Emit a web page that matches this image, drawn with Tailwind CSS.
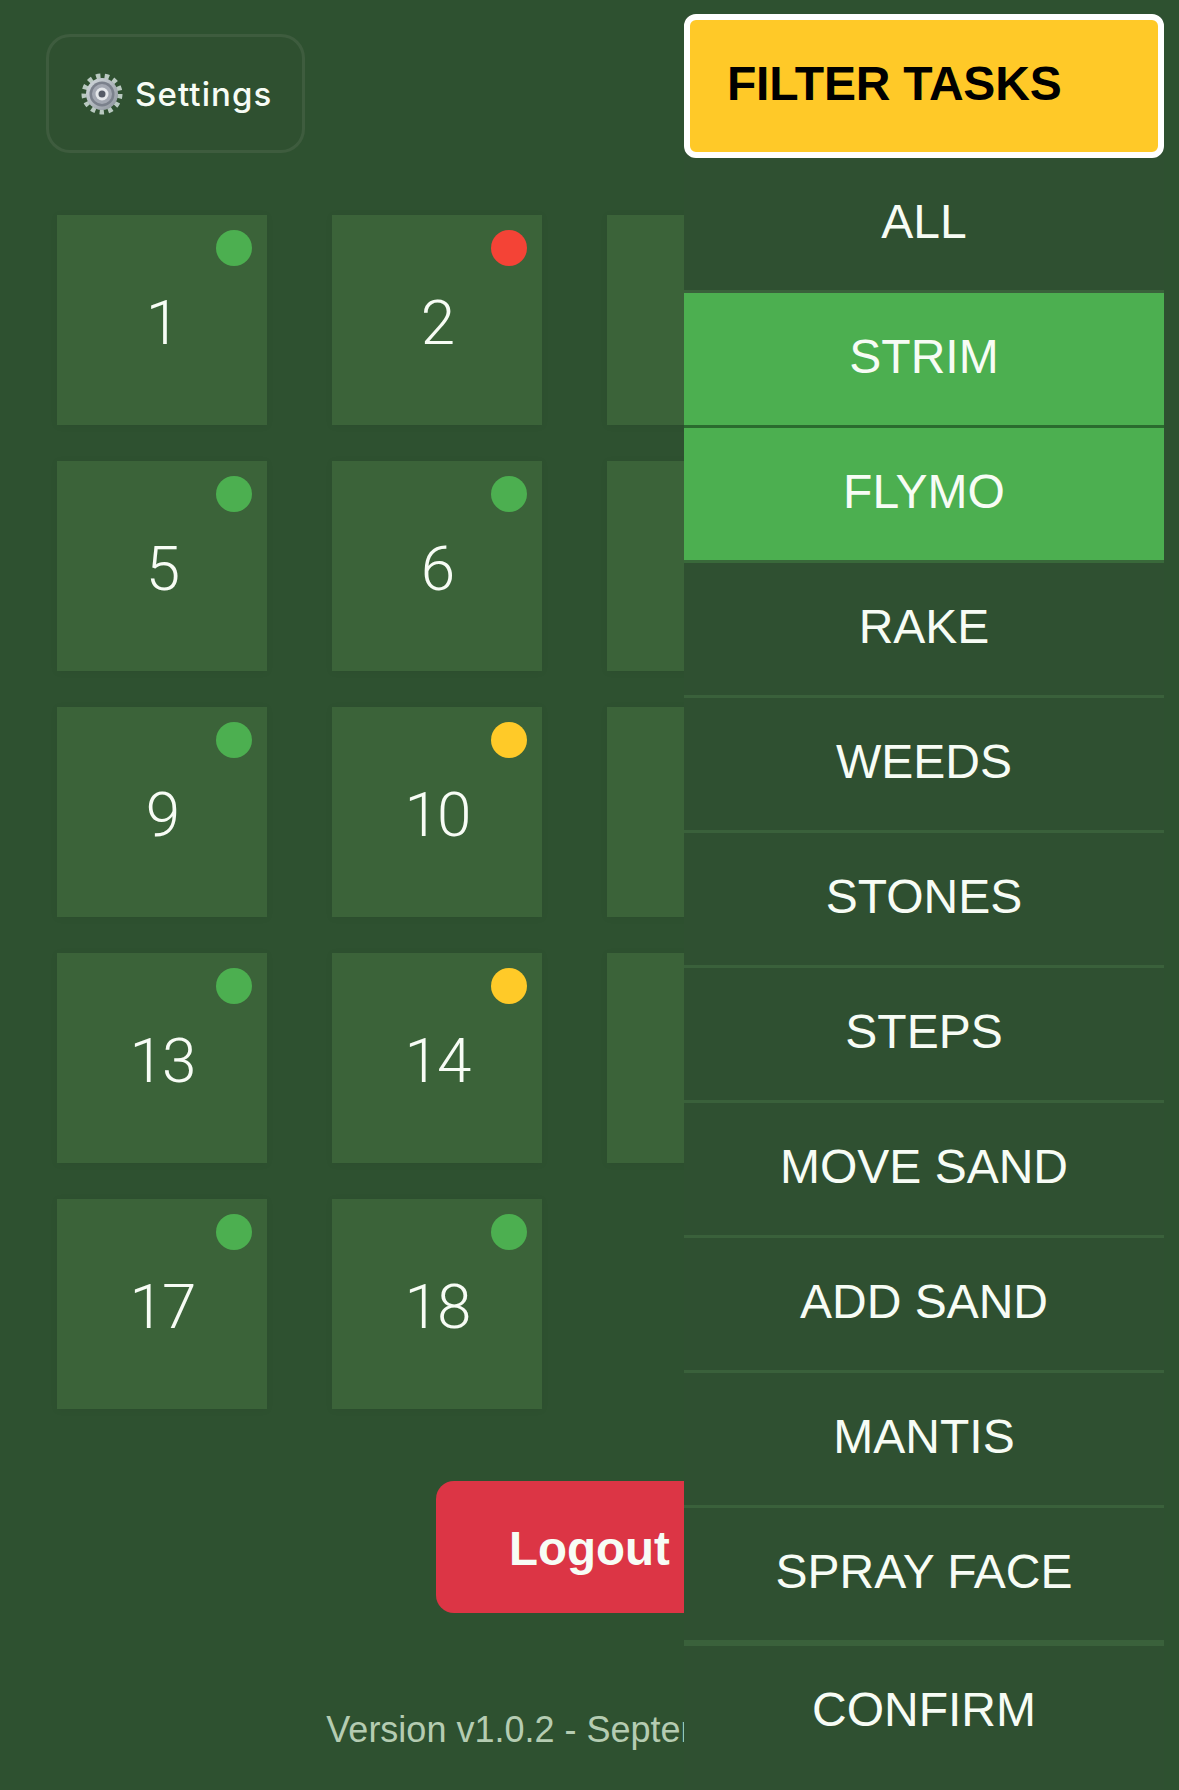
<!DOCTYPE html>
<html lang="en">
<head>
    <meta charset="UTF-8">
    <meta name="viewport" content="width=device-width, initial-scale=1.0">
    <title>Tasks</title>
    <script src="https://cdn.jsdelivr.net/npm/@tailwindcss/browser@4"></script>
</head>
<body class="bg-[#2e5130] font-['Liberation_Sans',Arial,sans-serif]">
    <div class="relative w-[1179px] h-[1790px] overflow-hidden text-[#f7fcf5]">

        <!-- Settings -->
        <div class="pt-[34px] pl-[46px]">
            <button class="flex items-center w-[259px] h-[119px] pl-[32px] gap-[12px] rounded-[24px] border-[3px] border-white/[0.07] bg-[#2f5030]">
                <svg class="w-[42px] h-[42px] shrink-0" viewBox="0 0 42 42">
                    <defs>
                        <linearGradient id="metal" x1="0" y1="0" x2="1" y2="1">
                            <stop offset="0" stop-color="#d5dcdf"/>
                            <stop offset="1" stop-color="#8d939c"/>
                        </linearGradient>
                    </defs>
                    <circle cx="21" cy="21" r="18" fill="none" stroke="#b9c9c0" stroke-width="5" stroke-dasharray="4.4 4.3"/>
                    <circle cx="21" cy="21" r="16" fill="url(#metal)"/>
                    <circle cx="21" cy="21" r="12.5" fill="#7b818c"/>
                    <circle cx="21" cy="21" r="10" fill="#a3a8b2"/>
                    <circle cx="21" cy="21" r="6.5" fill="#e4e7ea"/>
                    <circle cx="21" cy="21" r="3.5" fill="#555b66"/>
                </svg>
                <span class="pt-[2px] font-['Inter',sans-serif] font-medium text-[33px] tracking-[1.1px]">Settings</span>
            </button>
        </div>

        <!-- Holes -->
        <div class="grid grid-cols-[repeat(4,210px)] auto-rows-[210px] gap-x-[65px] gap-y-[36px] mt-[62px] ml-[57px] font-['Roboto',sans-serif] font-[350] text-[62px] tracking-[-2px]">
            <div class="relative flex items-center justify-center pt-[5px] bg-[#3b6339] shadow-[0_1px_8px_rgba(0,0,0,0.05)]">1<span class="absolute top-[15px] right-[15px] w-[36px] h-[36px] rounded-full bg-[#4caf50]"></span></div>
            <div class="relative flex items-center justify-center pt-[5px] bg-[#3b6339] shadow-[0_1px_8px_rgba(0,0,0,0.05)]">2<span class="absolute top-[15px] right-[15px] w-[36px] h-[36px] rounded-full bg-[#f44336]"></span></div>
            <div class="bg-[#3b6339] shadow-[0_1px_8px_rgba(0,0,0,0.05)]"></div>
            <div></div>
            <div class="relative flex items-center justify-center pt-[5px] bg-[#3b6339] shadow-[0_1px_8px_rgba(0,0,0,0.05)]">5<span class="absolute top-[15px] right-[15px] w-[36px] h-[36px] rounded-full bg-[#4caf50]"></span></div>
            <div class="relative flex items-center justify-center pt-[5px] bg-[#3b6339] shadow-[0_1px_8px_rgba(0,0,0,0.05)]">6<span class="absolute top-[15px] right-[15px] w-[36px] h-[36px] rounded-full bg-[#4caf50]"></span></div>
            <div class="bg-[#3b6339] shadow-[0_1px_8px_rgba(0,0,0,0.05)]"></div>
            <div></div>
            <div class="relative flex items-center justify-center pt-[5px] bg-[#3b6339] shadow-[0_1px_8px_rgba(0,0,0,0.05)]">9<span class="absolute top-[15px] right-[15px] w-[36px] h-[36px] rounded-full bg-[#4caf50]"></span></div>
            <div class="relative flex items-center justify-center pt-[5px] bg-[#3b6339] shadow-[0_1px_8px_rgba(0,0,0,0.05)]">10<span class="absolute top-[15px] right-[15px] w-[36px] h-[36px] rounded-full bg-[#ffca28]"></span></div>
            <div class="bg-[#3b6339] shadow-[0_1px_8px_rgba(0,0,0,0.05)]"></div>
            <div></div>
            <div class="relative flex items-center justify-center pt-[5px] bg-[#3b6339] shadow-[0_1px_8px_rgba(0,0,0,0.05)]">13<span class="absolute top-[15px] right-[15px] w-[36px] h-[36px] rounded-full bg-[#4caf50]"></span></div>
            <div class="relative flex items-center justify-center pt-[5px] bg-[#3b6339] shadow-[0_1px_8px_rgba(0,0,0,0.05)]">14<span class="absolute top-[15px] right-[15px] w-[36px] h-[36px] rounded-full bg-[#ffca28]"></span></div>
            <div class="bg-[#3b6339] shadow-[0_1px_8px_rgba(0,0,0,0.05)]"></div>
            <div></div>
            <div class="relative flex items-center justify-center pt-[5px] bg-[#3b6339] shadow-[0_1px_8px_rgba(0,0,0,0.05)]">17<span class="absolute top-[15px] right-[15px] w-[36px] h-[36px] rounded-full bg-[#4caf50]"></span></div>
            <div class="relative flex items-center justify-center pt-[5px] bg-[#3b6339] shadow-[0_1px_8px_rgba(0,0,0,0.05)]">18<span class="absolute top-[15px] right-[15px] w-[36px] h-[36px] rounded-full bg-[#4caf50]"></span></div>
        </div>

        <!-- Logout + version -->
        <div class="flex flex-col items-center mt-[72px]">
            <button class="w-[307px] h-[132px] rounded-[18px] bg-[#dc3545] text-[47.5px] font-bold pt-[3px]">Logout</button>
            <div class="mt-[96px] text-[36px] leading-[42px] text-[#b5ccb2] whitespace-nowrap">Version v1.0.2 - September 2025</div>
        </div>

        <!-- Filter panel (overlay) -->
        <div class="absolute top-[14px] bottom-0 right-[15px] w-[480px] flex flex-col bg-[#2f5031] text-[48px] text-center">
            <div class="h-[144px] shrink-0 flex items-center pl-[37px] pb-[4px] rounded-[12px] border-[6px] border-white bg-[#ffc928] text-black font-bold text-[48px] tracking-[-0.2px]">FILTER TASKS</div>
            <div class="h-[135px] shrink-0 flex items-center justify-center pb-[4px] border-b-[3px] border-[#3a613b]">ALL</div>
            <div class="h-[135px] shrink-0 flex items-center justify-center pb-[4px] border-b-[3px] border-[#2a6b2e] bg-[#4caf50]">STRIM</div>
            <div class="h-[135px] shrink-0 flex items-center justify-center pb-[4px] border-b-[3px] border-[#39693a] bg-[#4caf50]">FLYMO</div>
            <div class="h-[135px] shrink-0 flex items-center justify-center pb-[4px] border-b-[3px] border-[#3a613b]">RAKE</div>
            <div class="h-[135px] shrink-0 flex items-center justify-center pb-[4px] border-b-[3px] border-[#3a613b]">WEEDS</div>
            <div class="h-[135px] shrink-0 flex items-center justify-center pb-[4px] border-b-[3px] border-[#3a613b]">STONES</div>
            <div class="h-[135px] shrink-0 flex items-center justify-center pb-[4px] border-b-[3px] border-[#3a613b]">STEPS</div>
            <div class="h-[135px] shrink-0 flex items-center justify-center pb-[4px] border-b-[3px] border-[#3a613b]">MOVE SAND</div>
            <div class="h-[135px] shrink-0 flex items-center justify-center pb-[4px] border-b-[3px] border-[#3a613b]">ADD SAND</div>
            <div class="h-[135px] shrink-0 flex items-center justify-center pb-[4px] border-b-[3px] border-[#3a613b]">MANTIS</div>
            <div class="h-[138px] shrink-0 flex items-center justify-center pb-[4px] border-b-[6px] border-[#3a613b]">SPRAY FACE</div>
            <div class="h-[132px] shrink-0 flex items-center justify-center pb-[4px]">CONFIRM</div>
        </div>
    </div>
</body>
</html>
